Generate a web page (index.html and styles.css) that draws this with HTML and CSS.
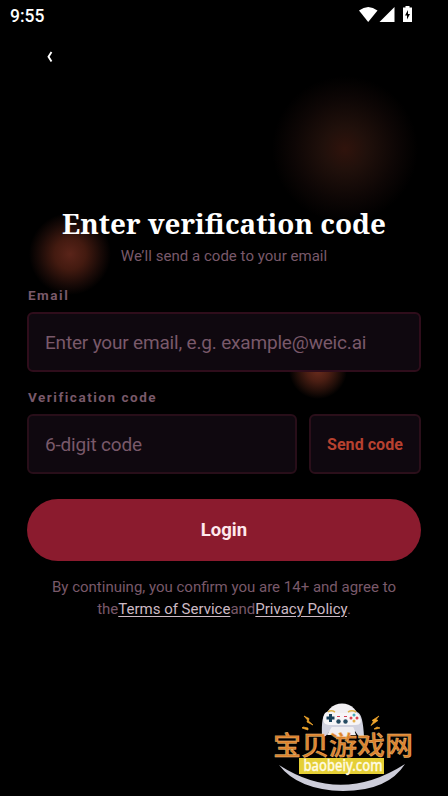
FILE: index.html
```html
<!DOCTYPE html>
<html lang="en">
<head>
<meta charset="utf-8">
<meta name="viewport" content="width=device-width, initial-scale=1">
<title>Enter verification code</title>
<link rel="stylesheet" href="styles.css">
</head>
<body>
<div class="screen">
  <div class="orb orb-large"></div>
  <div class="orb orb-medium"></div>
  <div class="orb orb-small"></div>
  <header class="status">
    <span>9:55</span>
    <svg width="56" height="18" viewBox="0 0 56 18" fill="#fff">
      <path d="M0 4.5Q9.2-2.5 18.5 4.5L9.2 16Z"/>
      <path d="M20.5 16 35.500 1V16Z"/>
      <path fill-rule="evenodd" d="M46.500 0h4v1.500H53V16h-9V1.500h2.500ZM49 4l-3 5.500h2v4l3-5.500h-2Z"/>
    </svg>
  </header>
  <nav class="nav">
    <button class="back" aria-label="Back"><svg width="7" height="12" viewBox="0 0 7 12" fill="none" stroke="#fff" stroke-width="1.900"><path d="M5.500 1 2.500 5.700 5.500 10.500"/></svg></button>
  </nav>
  <main>
    <h1>Enter verification code</h1>
    <p class="sub">We’ll send a code to your email</p>
    <label class="label" for="email">Email</label>
    <input class="field" id="email" type="text" placeholder="Enter your email, e.g. example@weic.ai">
    <label class="label label-code" for="code">Verification code</label>
    <div class="row">
      <input class="field" id="code" type="text" placeholder="6-digit code">
      <button class="send">Send code</button>
    </div>
    <button class="login">Login</button>
    <p class="terms">By continuing, you confirm you are 14+ and agree to<br>the<a>Terms of Service</a>and<a>Privacy Policy</a>.</p>
  </main>
  <svg class="mark" width="160" height="101" viewBox="0 0 160 101">
    <path d="M14 70Q76 110 140 69Q123 96 78 96Q33 95 14 70Z" fill="#cdcdd9"/>
    <ellipse cx="77" cy="25.500" rx="17" ry="17" fill="#f1eff2"/>
    <path d="M61 17.500Q65 15 69 18H84Q88 15 93 17.500Q98 20 99 42Q93 44 88 32H67Q61 44 57 41Q56 21 61 17.500Z" fill="#d1d2df"/>
    <path d="M67 32H88L91 40H62Z" fill="#f1eff2"/>
    <path d="M60 18Q65 15 70 18H84Q90 15 94 20Q99 30 90 30H64Q55 29 60 18Z" fill="#f7f5f7"/>
    <path d="M63 17Q66 14.500 70 17M83 17Q87 14.500 91 17" stroke="#dfb34c" stroke-width="1.500" fill="none"/>
    <path d="M65.500 19v8M61.500 23h8" stroke="#17405a" stroke-width="3"/>
    <circle cx="73.500" cy="26.500" r="2.200" fill="#264b62"/><circle cx="80.500" cy="26.500" r="2.200" fill="#264b62"/>
    <path d="M72 21.500h3M79 21.500h3" stroke="#d23d58"/>
    <circle cx="89" cy="20" r="1.500" fill="#47acbd"/><circle cx="89" cy="26" r="1.500" fill="#e6b04e"/><circle cx="86" cy="23" r="1.500" fill="#df4454"/><circle cx="92" cy="23" r="1.500" fill="#df4454"/>
    <path d="M39 21 44 23.500 43.500 26 48 30 42 27 42.500 25ZM38 32 43 33 43 35 37 33ZM114 21 111 24.500 113 25.500 106 30.500 108.500 26.500 107 25.500ZM109 34 112 32 115 33 111 34Z" fill="#f0a62d" stroke="#f0a62d" stroke-width=".7"/>
    <text class="brand" x="8" y="59.500" textLength="140" lengthAdjust="spacingAndGlyphs">宝贝游戏网</text>
    <path d="M34 63H119V79H34Z" fill="#e5cf35"/>
    <text class="domain" x="38.500" y="75.500" textLength="79" lengthAdjust="spacingAndGlyphs">baobeiy.com</text>
  </svg>
</div>
</body>
</html>
```
FILE: styles.css
```css
* { box-sizing: border-box; }
body { margin: 0; background: #000; font-family: Roboto, sans-serif; }
button, input { font-family: inherit; margin: 0; }
.screen { position: relative; width: 448px; height: 796px; overflow: hidden; background: #000; }
.orb { position: absolute; border-radius: 50%; }
.orb-large { left: 272px; top: 76px; width: 146px; height: 146px; background: radial-gradient(closest-side, #30130c 0%, #20100b 30%, #0d0605 70%, #000 100%); }
.orb-medium { left: 29px; top: 213px; width: 82px; height: 82px; background: radial-gradient(closest-side, #5a2419 0%, #431a10 38%, #190a07 75%, #000 100%); }
.orb-small { left: 289px; top: 341px; width: 58px; height: 58px; background: radial-gradient(closest-side, #6a2c1d 0%, #4a1e13 40%, #1e0d08 76%, #000 100%); }
.status { position: relative; height: 32px; padding: 6px 33px 0 10px; display: flex; justify-content: space-between; color: #fff; font-size: 17.500px; line-height: 20px; font-weight: 500; }
.nav { position: relative; height: 50px; padding: 19px 0 0 46px; }
.back { display: block; padding: 0; border: 0; background: none; }
.back svg { display: block; }
main { position: relative; padding: 122px 27px 0; }
h1 { margin: 0; height: 38px; color: #fff; font: 700 27.850px/38px "Noto Serif", "Droid Serif", "DejaVu Serif", serif; text-align: center; white-space: nowrap; }
.sub { margin: 3px 0 0; font-size: 15px; line-height: 22px; text-align: center; color: #79596a; letter-spacing: .03px; }
.label { display: block; margin: 19px 0 0 1px; font-size: 13.500px; line-height: 18px; font-weight: 700; letter-spacing: 1.520px; color: #79596a; }
.field { display: block; width: 100%; height: 60px; margin-top: 8px; padding: 0 16px; border: 2px solid #2f0d1b; border-radius: 6px; background: #0f080f; font-size: 19px; letter-spacing: -.18px; color: #fff; }
.field::placeholder { color: #79596a; opacity: 1; }
.label-code { margin-top: 16px; }
.row { display: flex; gap: 12px; margin-top: 8px; }
.row .field { flex: 1; min-width: 0; margin: 0; border-color: #280e19; }
.send { width: 112px; height: 60px; padding: 0; border: 2px solid #2b0f1a; border-radius: 6px; background: #0f080f; color: #b7412f; font-size: 16px; font-weight: 700; letter-spacing: .05px; }
.login { display: block; width: 100%; height: 62px; margin-top: 25px; padding: 0; border: 0; border-radius: 31px; background: #8b1b2e; color: #ffe9ed; font-size: 18.500px; font-weight: 700; }
.terms { margin: 15px 0 0; text-align: center; font-size: 15px; line-height: 22px; color: #79596a; white-space: nowrap; }
.terms a { color: #cdbac4; text-decoration: underline; text-underline-offset: 2px; text-decoration-thickness: 1px; }
.mark { position: absolute; left: 265px; top: 695px; }
.brand { font: 500 26px "Noto Sans CJK SC", sans-serif; fill: #dc822d; stroke: #f1c17d; stroke-width: .4px; }
.domain { font: 500 15.500px "Noto Sans", sans-serif; fill: #fffbe1; stroke: #fffbe1; stroke-width: .3px; }
```
